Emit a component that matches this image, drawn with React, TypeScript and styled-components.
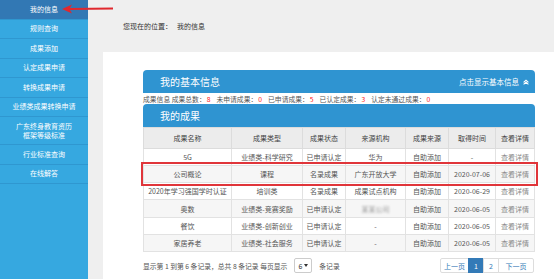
import React from "react";
import styled, { createGlobalStyle } from "styled-components";

const GlobalStyle = createGlobalStyle`
  html, body { margin: 0; padding: 0; }
  body {
    font-family: "Noto Sans CJK SC", "Noto Sans", "Liberation Sans", sans-serif;
    background: #efefef;
    overflow: hidden;
  }
  * { box-sizing: border-box; }
`;

const Page = styled.div`
  position: relative;
  display: flex;
  width: 554px;
  height: 279px;
  overflow: hidden;
`;

const Sidebar = styled.nav`
  width: 88px;
  flex: none;
  background: #36a8e0;
  display: flex;
  flex-direction: column;
`;

const NavItem = styled.div<{ $active?: boolean; $tall?: boolean }>`
  height: ${(p) => (p.$tall ? "28px" : "19.5px")};
  flex: none;
  display: flex;
  align-items: center;
  justify-content: center;
  text-align: center;
  font-size: 7px;
  line-height: 9px;
  color: #fff;
  background: ${(p) => (p.$active ? "#3278b4" : "transparent")};
  border-bottom: 1px solid #2f97d0;
`;

const Main = styled.main`
  flex: 1;
  display: flex;
  flex-direction: column;
  background: #efefef;
`;

const Crumb = styled.div`
  height: 52px;
  flex: none;
  display: flex;
  align-items: center;
  padding-left: 35px;
  font-size: 7px;
  color: #333;
  gap: 5px;
`;

const Panel = styled.section`
  flex: 1;
  margin-left: 15px;
  background: #fff;
  padding: 18px 19px 0 40px;
  display: flex;
  flex-direction: column;
  & > * { flex-shrink: 0; }
`;

const BarHeader = styled.div`
  height: 23px;
  background: #2f94d1;
  border-radius: 4px 4px 0 0;
  display: flex;
  align-items: center;
  justify-content: space-between;
  padding: 0 6px 0 17px;
  color: #fff;
`;

const BarTitle = styled.span`
  font-size: 10px;
`;

const BarToggle = styled.span`
  font-size: 7.5px;
  display: flex;
  align-items: center;
  gap: 4px;
`;

const Stats = styled.div`
  height: 11px;
  display: flex;
  align-items: center;
  font-size: 6.8px;
  color: #555;
  white-space: nowrap;
  gap: 3px;
`;

const Num = styled.span`
  color: #ff2020;
  margin: 0 3px 0 1px;
`;

const Table = styled.table`
  width: 100%;
  border-collapse: collapse;
  table-layout: fixed;
  font-size: 7px;
  color: #555;
`;

const HeadRow = styled.tr`
  height: 20.5px;
`;

const HeadCell = styled.th`
  background: #ececec;
  border: 1px solid #dcdcdc;
  font-weight: normal;
  color: #444;
  text-align: center;
  padding: 0;
`;

const Row = styled.tr<{ $striped?: boolean; $marked?: boolean }>`
  height: 17.3px;
  background: ${(p) => (p.$striped ? "#f6f6f6" : "#fff")};
  ${(p) => (p.$marked ? "outline: 2px solid #e0353a; outline-offset: 1px;" : "")}
`;

const Cell = styled.td<{ $muted?: boolean }>`
  border: 1px solid #e2e2e2;
  text-align: center;
  padding: 0;
  white-space: nowrap;
  overflow: hidden;
  color: ${(p) => (p.$muted ? "#8a8a8a" : "#555")};
`;

const Blurred = styled.span`
  filter: blur(1.2px);
  color: #999;
`;

const Footer = styled.div`
  display: flex;
  align-items: center;
  justify-content: space-between;
  margin-top: 6px;
  height: 15px;
`;

const FooterText = styled.div`
  display: flex;
  align-items: center;
  gap: 4px;
  font-size: 6.8px;
  color: #555;
  white-space: nowrap;
`;

const PageSize = styled.span`
  display: inline-flex;
  align-items: center;
  justify-content: center;
  gap: 2px;
  width: 18px;
  height: 15px;
  border: 1px solid #ccc;
  border-radius: 2px;
  margin: 0 3px;
  font-size: 7px;
  color: #333;
`;

const Pager = styled.div`
  display: flex;
  height: 15px;
  margin-right: 1px;
`;

const PageBtn = styled.span<{ $active?: boolean; $w: number }>`
  width: ${(p) => p.$w}px;
  height: 15px;
  display: flex;
  align-items: center;
  justify-content: center;
  font-size: 7px;
  border: 1px solid #ddd;
  margin-left: -1px;
  background: ${(p) => (p.$active ? "#337ab7" : "#fff")};
  color: ${(p) => (p.$active ? "#fff" : "#337ab7")};
  border-color: ${(p) => (p.$active ? "#337ab7" : "#ddd")};
  &:first-child { border-radius: 2px 0 0 2px; }
  &:last-child { border-radius: 0 2px 2px 0; }
`;

const Arrow = styled.svg`
  position: absolute;
  left: 60px;
  top: 3px;
`;

const cols = [88, 71, 43, 60, 43, 47, 39];

type R = [string, string, string, React.ReactNode, string, string];
const rows: R[] = [
  ["5G", "业绩类-科学研究", "已申请认定", "华为", "自助添加", "-"],
  ["公司概论", "课程", "名录成果", "广东开放大学", "自助添加", "2020-07-06"],
  ["2020年学习强国学时认证", "培训类", "名录成果", "成果试点机构", "自助添加", "2020-06-29"],
  ["奥数", "业绩类-竞赛奖励", "已申请认定", <Blurred>某某公司</Blurred>, "自助添加", "2020-06-05"],
  ["餐饮", "业绩类-创新创业", "已申请认定", "-", "自助添加", "2020-06-05"],
  ["家居养老", "业绩类-社会服务", "已申请认定", "-", "自助添加", "2020-06-05"],
];

const navs = ["我的信息", "规则查询", "成果添加", "认定成果申请", "转换成果申请", "业绩类成果转换申请"];

export default function App() {
  return (
    <>
      <GlobalStyle />
      <Page>
        <Sidebar>
          {navs.map((n, i) => (
            <NavItem key={n} $active={i === 0}>{n}</NavItem>
          ))}
          <NavItem $tall>
            广东终身教育资历
            <br />
            框架等级标准
          </NavItem>
          <NavItem>行业标准查询</NavItem>
          <NavItem>在线解答</NavItem>
        </Sidebar>
        <Main>
          <Crumb>
            <span>您现在的位置：</span>
            <span>我的信息</span>
          </Crumb>
          <Panel>
            <BarHeader>
              <BarTitle>我的基本信息</BarTitle>
              <BarToggle>
                点击显示基本信息
                <svg width="6" height="6" viewBox="0 0 10 10">
                  <path d="M1 5.5 L5 2 L9 5.5 M1 9 L5 5.5 L9 9" fill="none" stroke="#fff" strokeWidth="1.8" />
                </svg>
              </BarToggle>
            </BarHeader>
            <Stats>
              <span>成果信息 成果总数：<Num>8</Num></span>
              <span>未申请成果：<Num>0</Num></span>
              <span>已申请成果：<Num>5</Num></span>
              <span>已认定成果：<Num>3</Num></span>
              <span>认定未通过成果：<Num>0</Num></span>
            </Stats>
            <BarHeader>
              <BarTitle>我的成果</BarTitle>
            </BarHeader>
            <Table>
              <colgroup>
                {cols.map((w, i) => (
                  <col key={i} style={{ width: w }} />
                ))}
              </colgroup>
              <thead>
                <HeadRow>
                  {["成果名称", "成果类型", "成果状态", "来源机构", "成果来源", "取得时间", "查看详情"].map((h) => (
                    <HeadCell key={h}>{h}</HeadCell>
                  ))}
                </HeadRow>
              </thead>
              <tbody>
                {rows.map((r, i) => (
                  <Row key={i} $striped={i % 2 === 1} $marked={i === 1}>
                    {r.map((c, j) => (
                      <Cell key={j}>{c}</Cell>
                    ))}
                    <Cell $muted>查看详情</Cell>
                  </Row>
                ))}
              </tbody>
            </Table>
            <Footer>
              <FooterText>
                显示第 1 到第 6 条记录，总共 8 条记录 每页显示
                <PageSize>
                  6
                  <svg width="4" height="3" viewBox="0 0 4 3">
                    <path d="M0 0 L4 0 L2 3 Z" fill="#333" />
                  </svg>
                </PageSize>
                条记录
              </FooterText>
              <Pager>
                <PageBtn $w={29}>上一页</PageBtn>
                <PageBtn $w={16} $active>1</PageBtn>
                <PageBtn $w={16}>2</PageBtn>
                <PageBtn $w={36}>下一页</PageBtn>
              </Pager>
            </Footer>
          </Panel>
        </Main>
        <Arrow width="54" height="12" viewBox="0 0 54 12">
          <path d="M2 6 L12 1.5 L10 5 L53 4.6 L53 6.4 L10 7 L12 10.5 Z" fill="#e0282e" />
        </Arrow>
      </Page>
    </>
  );
}
